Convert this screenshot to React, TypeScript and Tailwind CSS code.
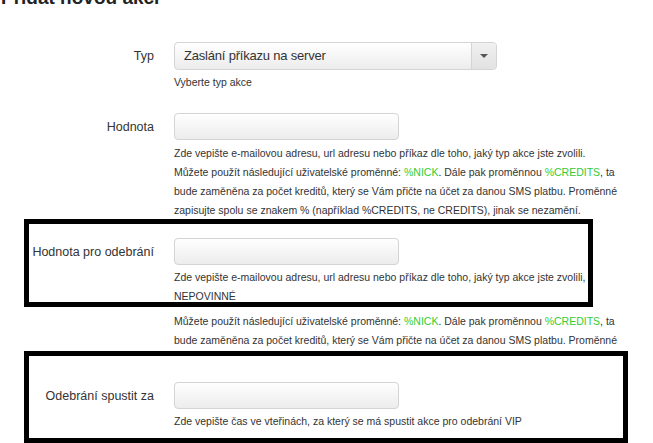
const hint = "text-[10.5px] leading-[19px] text-[#333] font-['Liberation_Sans',Arial,sans-serif]";

const Field = () => (
  <div className="h-[27px] w-[225px] rounded-[4px] border border-[#d4d4d4] bg-gradient-to-b from-white to-[#ececec]"></div>
);

const Vars = () => (
  <p className={hint}>
    Můžete použít následující uživatelské proměnné: <span className="text-[#3c3]">%NICK</span>. Dále pak proměnnou{" "}
    <span className="text-[#3c3]">%CREDITS</span>, ta bude zaměněna za počet kreditů, který se Vám přičte na účet za danou SMS
    platbu. Proměnné zapisujte spolu se znakem % (například %CREDITS, ne CREDITS), jinak se nezamění.
  </p>
);

const Row = ({ label, top, children }: { label: string; top?: string; children: React.ReactNode }) => (
  <div className={`flex ${top ?? ""}`}>
    <div className="w-[154px] shrink-0 pt-[4px] text-right text-[12.5px] leading-[20px] text-[#333]">{label}</div>
    <div className="ml-[20px] w-[446px]">{children}</div>
  </div>
);

export default function App() {
  return (
    <div className="relative h-[443px] w-[653px] overflow-hidden bg-white font-['Liberation_Sans',Arial,sans-serif]">
      <h2 className="mt-[-13px] pl-[1px] text-[19px] font-bold leading-[22px] text-[#222]">Přidat novou akci</h2>

      <div className="pt-[33px]">
        <Row label="Typ">
          <div className="flex h-[28px] w-[323px] rounded-[4px] border border-[#d4d4d4] bg-gradient-to-b from-white to-[#ececec]">
            <div className="flex-1 pl-[9px] text-[13px] leading-[26px] tracking-[-0.2px] text-[#333]">Zaslání příkazu na server</div>
            <div className="flex w-[25px] items-center justify-center rounded-r-[4px] border-l border-[#d4d4d4] bg-gradient-to-b from-[#f0f0f0] to-[#e2e2e2]">
              <div className="h-0 w-0 border-x-[4px] border-t-[4px] border-x-transparent border-t-[#555]"></div>
            </div>
          </div>
          <p className={`${hint} mt-[3px]`}>Vyberte typ akce</p>
        </Row>

        <Row label="Hodnota" top="mt-[21px]">
          <Field />
          <p className={`${hint} mt-[4px]`}>
            Zde vepište e-mailovou adresu, url adresu nebo příkaz dle toho, jaký typ akce jste zvolili.
          </p>
          <Vars />
        </Row>

        <Row label="Hodnota pro odebrání" top="mt-[18px]">
          <Field />
          <p className={`${hint} mt-[3px]`}>
            Zde vepište e-mailovou adresu, url adresu nebo příkaz dle toho, jaký typ akce jste zvolili, NEPOVINNÉ
          </p>
          <div className="mt-[6px] h-[42px] overflow-hidden">
            <Vars />
          </div>
        </Row>

        <Row label="Odebrání spustit za" top="mt-[28px]">
          <Field />
          <p className={`${hint} mt-[3px]`}>Zde vepište čas ve vteřinách, za který se má spustit akce pro odebrání VIP</p>
        </Row>
      </div>

      {/* annotation frames drawn over the form */}
      <div className="absolute left-[24px] top-[219px] h-[88px] w-[569px] border-[5px] border-black"></div>
      <div className="absolute left-[24px] top-[351px] h-[92px] w-[604px] border-[5px] border-black"></div>
    </div>
  );
}
